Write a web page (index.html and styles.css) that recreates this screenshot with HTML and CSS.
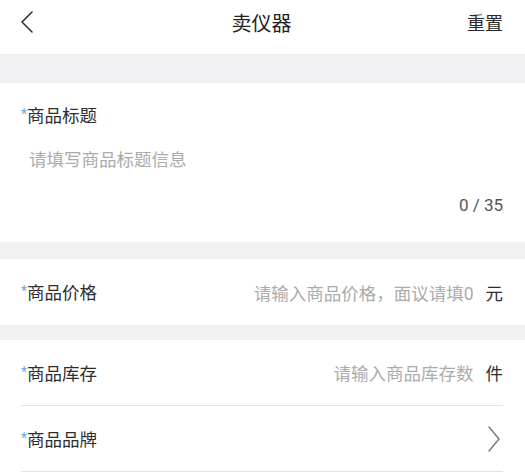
FILE: index.html
```html
<!DOCTYPE html>
<html lang="zh-CN">
<head>
<meta charset="utf-8">
<title>卖仪器</title>
<link rel="stylesheet" href="styles.css">
</head>
<body>
<div class="page">
  <header class="navbar">
    <span class="nav-back">
      <svg width="14" height="22" viewBox="0 0 14 22"><path d="M12 1 L2 11 L12 21" fill="none" stroke="#333" stroke-width="1.6" stroke-linecap="round" stroke-linejoin="round"/></svg>
    </span>
    <h1 class="nav-title">卖仪器</h1>
    <span class="nav-action">重置</span>
  </header>
  <div class="gap gap-top"></div>
  <section class="card card-title">
    <div class="label"><span class="req">*</span>商品标题</div>
    <div class="placeholder title-ph">请填写商品标题信息</div>
    <div class="counter">0 / 35</div>
  </section>
  <div class="gap gap-mid"></div>
  <section class="card">
    <div class="row">
      <div class="label"><span class="req">*</span>商品价格</div>
      <div class="value"><span class="placeholder">请输入商品价格，面议请填0</span><span class="unit">元</span></div>
    </div>
  </section>
  <div class="gap gap-low"></div>
  <section class="card">
    <div class="row row-line">
      <div class="label"><span class="req">*</span>商品库存</div>
      <div class="value"><span class="placeholder">请输入商品库存数</span><span class="unit">件</span></div>
    </div>
    <div class="row row-line">
      <div class="label"><span class="req">*</span>商品品牌</div>
      <div class="value">
        <svg class="chev" width="14" height="28" viewBox="0 0 14 28"><path d="M2 2 L12 14 L2 26" fill="none" stroke="#777" stroke-width="1.4" stroke-linecap="round" stroke-linejoin="round"/></svg>
      </div>
    </div>
  </section>
</div>
</body>
</html>
```
FILE: styles.css
```css
html, body {
  margin: 0;
  padding: 0;
  background: #ffffff;
}
body {
  font-family: Roboto, "Noto Sans CJK SC", sans-serif;
  color: #333;
}
.page {
  width: 525px;
  height: 476px;
  overflow: hidden;
}
.navbar {
  height: 55px;
  display: flex;
  align-items: center;
  justify-content: space-between;
  padding: 0 22px 0 20px;
  box-sizing: border-box;
  background: #fff;
  border-bottom: 1px solid #ececec;
}
.nav-back {
  display: flex;
  width: 60px;
  margin-top: -10px;
}
.nav-title {
  margin: -10px 0 0 0;
  font-size: 20px;
  font-weight: 400;
  color: #222;
}
.nav-action {
  width: 60px;
  text-align: right;
  font-size: 18px;
  color: #2a2a2a;
  margin-top: -10px;
}
.gap {
  background: #f1f1f3;
}
.gap-top { height: 28px; }
.gap-mid { height: 17px; }
.gap-low { height: 15px; }
.card {
  background: #fff;
  padding: 0 22px 0 21px;
}
.card-title {
  height: 159px;
  box-sizing: border-box;
  padding-top: 19px;
}
.label {
  font-size: 17.5px;
  color: #2e2e2e;
  line-height: 24px;
}
.req {
  color: #6ea6d4;
  font-size: 14px;
  vertical-align: 3px;
}
.title-ph {
  margin: 20px 0 0 8px;
  font-size: 17.5px;
  line-height: 24px;
}
.placeholder {
  color: #ababab;
}
.counter {
  margin-top: 21px;
  text-align: right;
  font-size: 17px;
  color: #555;
  line-height: 24px;
}
.row {
  height: 66px;
  display: flex;
  align-items: center;
  justify-content: space-between;
  box-sizing: border-box;
}
.row-line {
  border-bottom: 1px solid #e4e4e4;
}
.value {
  display: flex;
  align-items: center;
  font-size: 17.5px;
}
.unit {
  margin-left: 12px;
  color: #2e2e2e;
}
.chev {
  margin-right: 2px;
}
```
